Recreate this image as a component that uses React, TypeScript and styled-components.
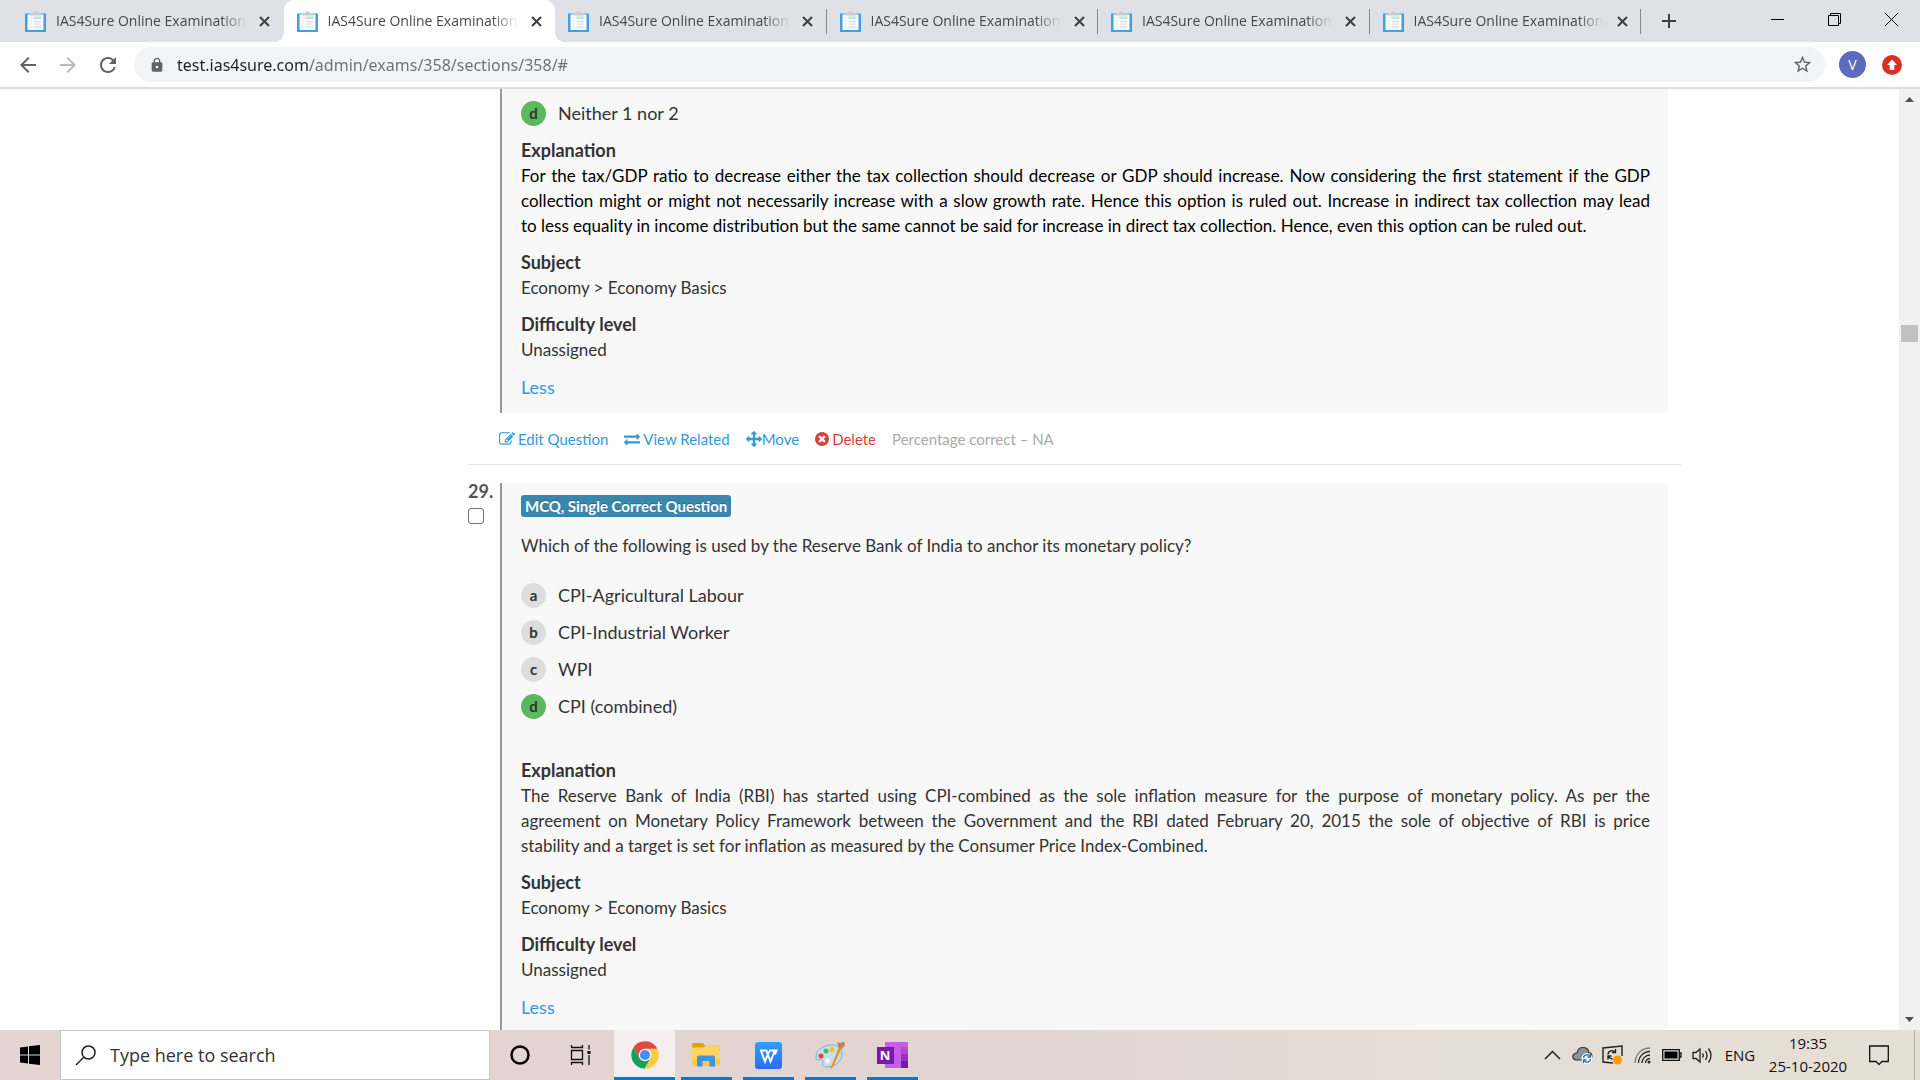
import React from "react";
import styled, { createGlobalStyle, css } from "styled-components";
import {
  MdAdd,
  MdArrowBack,
  MdArrowForward,
  MdLock,
  MdRefresh,
  MdStarBorder,
} from "react-icons/md";

const UI_FONT = '"Open Sans", "Noto Sans", sans-serif';
const PAGE_FONT = 'Lato, "Open Sans", sans-serif';

const GlobalStyle = createGlobalStyle`
  *, *::before, *::after { box-sizing: border-box; }
  body { margin: 0; background: #fff; }
  button { padding: 0; border: 0; background: none; font: inherit; color: inherit; }
  p, h3, ol { margin: 0; padding: 0; }
  svg { display: block; flex: none; }
`;

const Desktop = styled.div`
  display: flex;
  flex-direction: column;
  height: 100vh;
  overflow: hidden;
`;

/* ---------- browser frame ---------- */

const TabStrip = styled.header`
  display: flex;
  height: 42px;
  padding-left: 12px;
  background: #dee1e6;
  font-family: ${UI_FONT};
`;

const TabList = styled.div`
  display: flex;
  flex: 0 1 1629px;
  min-width: 0;
`;

const Tab = styled.div<{ $active?: boolean; $divider?: boolean }>`
  position: relative;
  display: flex;
  flex: 1 1 0;
  min-width: 0;
  align-items: center;
  gap: 10px;
  padding: 0 11px 0 13px;
  ${(p) =>
    p.$active &&
    css`
      background: #fff;
      border-radius: 10px 10px 0 0;
      &::before,
      &::after {
        content: "";
        position: absolute;
        bottom: 0;
        width: 10px;
        height: 10px;
      }
      &::before {
        right: 100%;
        background: radial-gradient(circle at 0 0, transparent 10px, #fff 10px);
      }
      &::after {
        left: 100%;
        background: radial-gradient(circle at 100% 0, transparent 10px, #fff 10px);
      }
    `}
  ${(p) =>
    p.$divider &&
    css`
      &::after {
        content: "";
        position: absolute;
        right: 0;
        top: 9px;
        width: 1px;
        height: 25px;
        background: #84878c;
      }
    `}
`;

const TabTitle = styled.span`
  flex: 1;
  min-width: 0;
  overflow: hidden;
  white-space: nowrap;
  font-size: 14px;
  line-height: 20px;
  color: #45494d;
  mask-image: linear-gradient(to right, #000 calc(100% - 26px), transparent);
`;

const TabClose = styled.button`
  display: grid;
  place-items: center;
  width: 16px;
  height: 20px;
`;

const NewTab = styled.button`
  display: grid;
  place-items: center;
  width: 56px;
  font-size: 24px;
  color: #3c4043;
`;

const WindowButtons = styled.div`
  display: flex;
  margin-left: auto;
  height: 38px;
`;

const WindowButton = styled.button`
  display: grid;
  place-items: center;
  width: 57px;
`;

const Toolbar = styled.div`
  display: flex;
  align-items: center;
  height: 47px;
  padding: 0 14px;
  border-bottom: 2px solid #dadce0;
  background: #fff;
  font-family: ${UI_FONT};
`;

const NavButton = styled.button<{ $dim?: boolean }>`
  display: grid;
  place-items: center;
  width: 40px;
  height: 35px;
  margin-left: -6px;
  margin-right: 6px;
  font-size: 24px;
  color: ${(p) => (p.$dim ? "#b8babc" : "#5f6368")};
`;

const AddressBar = styled.label`
  display: flex;
  flex: 1;
  align-items: center;
  gap: 12px;
  height: 35px;
  margin-right: 14px;
  padding: 0 12px 0 15px;
  border-radius: 18px;
  background: #f1f3f4;
  font-size: 16px;
  color: #5f6368;
`;

const AddressInput = styled.input`
  flex: 1;
  min-width: 0;
  padding: 0;
  border: 0;
  outline: 0;
  font-family: "Noto Sans", "Open Sans", sans-serif;
  font-size: 16px;
  line-height: 24px;
  background: linear-gradient(to right, #202124 133px, #6b6f73 133px);
  background-clip: text;
  -webkit-text-fill-color: transparent;
`;

const IconButton = styled.button`
  font-size: 21px;
  color: #5f6368;
`;

const Round = styled.button<{ $size: number; $color: string }>`
  display: grid;
  place-items: center;
  width: ${(p) => p.$size}px;
  height: ${(p) => p.$size}px;
  border-radius: 50%;
  background: ${(p) => p.$color};
  color: #fff;
  font-size: 14px;
`;

const ToolbarEnd = styled.div`
  display: flex;
  align-items: center;
  gap: 16px;
  margin-right: 4px;
`;

/* ---------- page ---------- */

const Viewport = styled.div`
  display: flex;
  flex: 1;
  min-height: 0;
`;

const Page = styled.main`
  flex: 1;
  min-width: 0;
  overflow: hidden;
  padding: 0 218px 0 468px;
  font-family: ${PAGE_FONT};
  font-size: 17px;
  line-height: 25px;
  color: #333;
`;

const Question = styled.section`
  display: grid;
  grid-template-columns: 32px minmax(0, 1fr);
  padding-right: 13px;
`;

const Marker = styled.div`
  display: flex;
  flex-direction: column;
  align-items: flex-start;
  font-size: 18px;
  font-weight: 700;
  line-height: 16px;
  color: #555;
`;

const CheckBox = styled.input`
  appearance: none;
  width: 16px;
  height: 16px;
  margin: 9px 0 0;
  border: 1px solid #767676;
  border-radius: 3px;
  background: #fff;
`;

const Card = styled.div`
  padding: 12px 18px 13px 19px;
  border-left: 2px solid #999;
  background: #f8f8f8;
`;

const TypeLabel = styled.span`
  display: inline-block;
  padding: 0 4px;
  border-radius: 3px;
  background: #3a87ad;
  color: #fff;
  font-size: 15px;
  font-weight: 700;
  line-height: 22px;
  text-shadow: 0 -1px 0 rgba(0, 0, 0, 0.25);
  vertical-align: top;
`;

const Prompt = styled.p`
  margin: 13px 0 25px;
`;

const Options = styled.ol<{ $spaced?: boolean }>`
  display: flex;
  flex-direction: column;
  gap: 12px;
  margin-bottom: ${(p) => (p.$spaced ? 39 : 12)}px;
  font-size: 18px;
  list-style: none;
`;

const Option = styled.li`
  display: flex;
  gap: 12px;
`;

const Letter = styled.span<{ $correct?: boolean }>`
  width: 25px;
  height: 25px;
  border-radius: 50%;
  background: ${(p) => (p.$correct ? "#5cb85c" : "#ddd")};
  font-size: 15px;
  font-weight: 700;
  text-align: center;
`;

const Block = styled.div`
  margin-bottom: 12px;
`;

const BlockTitle = styled.h3`
  font-size: 18px;
  font-weight: 700;
  line-height: 25px;
`;

const BlockText = styled.p<{ $dark?: boolean }>`
  color: ${(p) => (p.$dark ? "#000" : "inherit")};
  text-align: justify;
`;

const Less = styled.a`
  display: inline-block;
  margin-top: 1px;
  color: #3498db;
  font-size: 18px;
  text-decoration: none;
  vertical-align: top;
`;

const Actions = styled.div`
  display: flex;
  align-items: center;
  gap: 16px;
  height: 51px;
  padding: 1px 0 0 31px;
  font-size: 15px;
`;

const Action = styled.a<{ $danger?: boolean; $tight?: boolean }>`
  display: flex;
  align-items: center;
  gap: ${(p) => (p.$tight ? 0 : 3)}px;
  color: ${(p) => (p.$danger ? "#d9403b" : "#3498db")};
  text-decoration: none;
`;

const Muted = styled.span`
  color: #aaa;
`;

const Rule = styled.hr`
  height: 1px;
  margin: 0 0 18px;
  border: 0;
  background: #e3e3e3;
`;

const ScrollTrack = styled.div`
  display: flex;
  flex-direction: column;
  width: 21px;
  background: #f1f1f1;
`;

const ScrollArrow = styled.button`
  display: grid;
  place-items: center;
  height: 21px;
`;

const ScrollThumb = styled.div`
  width: 17px;
  height: 17px;
  margin: 215px auto auto;
  background: #c1c1c1;
`;

/* ---------- taskbar ---------- */

const Taskbar = styled.footer`
  display: flex;
  height: 50px;
  background: linear-gradient(to right, #e4d5d2, #e2d4d1 50%, #e4ddd5 75%, #e6dfd6);
  font-family: ${UI_FONT};
  color: #111;
`;

const TaskButton = styled.button<{ $w: number }>`
  display: grid;
  place-items: center;
  width: ${(p) => p.$w}px;
`;

const SearchBox = styled.label`
  display: flex;
  align-items: center;
  gap: 14px;
  width: 430px;
  padding-left: 14px;
  border: 1px solid #c6c6cb;
  background: #fff;
`;

const SearchInput = styled.input`
  flex: 1;
  min-width: 0;
  padding: 0;
  border: 0;
  outline: 0;
  background: none;
  font-family: inherit;
  font-size: 18px;
  &::placeholder {
    color: #333;
    opacity: 1;
  }
`;

const Apps = styled.nav`
  display: flex;
  margin-left: 4px;
`;

const AppButton = styled.button<{ $active?: boolean }>`
  display: grid;
  place-items: center;
  width: ${(p) => (p.$active ? 61 : 62)}px;
  background:
    linear-gradient(#0078d7, #0078d7) center bottom / ${(p) => (p.$active ? "100%" : "51px")} 3px no-repeat,
    ${(p) => (p.$active ? "#f4efee" : "transparent")};
`;

const Tray = styled.div`
  display: flex;
  margin-left: auto;
  padding-right: 5px;
  font-size: 15px;
`;

const Clock = styled.button`
  width: 90px;
  line-height: 23px;
  font-size: 15px;
`;

const ShowDesktop = styled.button`
  width: 10px;
  border-right: 1px solid #b9b3ab;
`;

/* ---------- drawings ---------- */

const Favicon = () => (
  <svg width="21" height="21" viewBox="0 0 21 21">
    <path d="M0 2.500h21v18.500H0z" fill="#3f9fdf" />
    <path d="M2.500 3.500h16v15.500h-16z" fill="#fbfcfc" />
    <path d="M5 2h3l1-1.500h3L13 2h3v2.500H5z" fill="#c9cdd0" />
    <path d="M8.500 5.500h8v2.500h-8z" fill="#bfe6da" />
    <path d="M5.500 7H7M5.500 10H7M5.500 13H7M5.500 16H7M9 10.500h7M9 13h7M9 16h7" stroke="#cfd6da" />
  </svg>
);

const Cross = () => (
  <svg width="11" height="11" viewBox="0 0 11 11" stroke="#3c4043" strokeWidth="2">
    <path d="M1 1L10 10M10 1L1 10" />
  </svg>
);

const UpdateArrow = () => (
  <svg width="12" height="12" viewBox="0 0 12 12" fill="#fff">
    <path d="M6 .5L11 6H8.300v5H3.700V6H1z" />
  </svg>
);

const Triangle = ({ up }: { up?: boolean }) => (
  <svg width="9" height="5" viewBox="0 0 9 5">
    <path d={up ? "M0 5L4.500 0L9 5z" : "M0 0L4.500 5L9 0z"} fill="#505050" />
  </svg>
);

const glyphs = {
  edit: "M888 1184l116-116-152-152-116 116v56h96v96h56zm440-720q-16-16-33 1l-350 350q-17 17-1 33t33-1l350-350q17-17 1-33zm80 594v190q0 119-84.500 203.500t-203.500 84.500h-832q-119 0-203.500-84.500t-84.500-203.500v-832q0-119 84.500-203.500t203.500-84.500h832q63 0 117 25 15 7 18 23 3 17-9 29l-49 49q-14 14-32 8-23-6-45-6h-832q-66 0-113 47t-47 113v832q0 66 47 113t113 47h832q66 0 113-47t47-113v-126q0-13 9-22l64-64q15-15 35-7t20 29zm-96-738l288 288-672 672h-288v-288zm444 132l-92 92-288-288 92-92q28-28 68-28t68 28l152 152q28 28 28 68t-28 68z",
  exchange:
    "M1792 1184v192q0 13-9.500 22.500t-22.500 9.500h-1376v192q0 13-9.500 22.500t-22.500 9.500q-12 0-24-10l-319-320q-9-9-9-22 0-14 9-23l320-320q9-9 23-9 13 0 22.500 9.500t9.500 22.500v192h1376q13 0 22.500 9.500t9.500 22.500zm0-544q0 14-9 23l-320 320q-9 9-23 9-13 0-22.500-9.500t-9.500-22.500v-192h-1376q-13 0-22.500-9.500t-9.500-22.500v-192q0-13 9.500-22.500t22.500-9.500h1376v-192q0-14 9-23t23-9q12 0 24 10l319 319q9 9 9 23z",
  move: "M1792 896q0 26-19 45l-256 256q-19 19-45 19t-45-19-19-45v-128h-384v384h128q26 0 45 19t19 45-19 45l-256 256q-19 19-45 19t-45-19l-256-256q-19-19-19-45t19-45 45-19h128v-384h-384v128q0 26-19 45t-45 19-45-19l-256-256q-19-19-19-45t19-45l256-256q19-19 45-19t45 19 19 45v128h384v-384h-128q-26 0-45-19t-19-45 19-45l256-256q19-19 45-19t45 19l256 256q19 19 19 45t-19 45-45 19h-128v384h384v-128q0-26 19-45t45-19 45 19l256 256q19 19 19 45z",
  remove:
    "M1277 1122q0-26-19-45l-181-181 181-181q19-19 19-45 0-27-19-46l-90-90q-19-19-46-19-26 0-45 19l-181 181-181-181q-19-19-45-19-27 0-46 19l-90 90q-19 19-19 46 0 26 19 45l181 181-181 181q-19 19-19 45 0 27 19 46l90 90q19 19 46 19 26 0 45-19l181-181 181 181q19 19 45 19 27 0 46-19l90-90q19-19 19-46zm387-226q0 209-103 385.500t-279.500 279.500-385.500 103-385.500-103-279.500-279.500-103-385.500 103-385.500 279.500-279.500 385.500-103 385.500 103 279.500 279.500 103 385.500z",
};

const Glyph = ({ name, size = 16, inset = 0 }: { name: keyof typeof glyphs; size?: number; inset?: number }) => (
  <svg width={size} height={size} viewBox={`${inset} ${inset} ${1792 - inset * 2} ${1792 - inset * 2}`} fill="currentColor">
    <path d={glyphs[name]} />
  </svg>
);

const WindowsLogo = () => (
  <svg width="20" height="20" viewBox="0 0 20 20" fill="#000">
    <path d="M0 2.600L8 1.500V9.500H0zM9 1.300L20 0V9.500H9zM0 10.500H8V18.500L0 17.400zM9 10.500H20V20L9 18.700z" />
  </svg>
);

const SearchIcon = () => (
  <svg width="21" height="21" viewBox="0 0 21 21" fill="none" stroke="#222" strokeWidth="1.500">
    <circle cx="13.500" cy="7.500" r="6.500" />
    <path d="M9 12L1 20" />
  </svg>
);

const TaskViewIcon = () => (
  <svg width="21" height="20" viewBox="0 0 21 20" fill="none" stroke="#111" strokeWidth="1.300">
    <path d="M1.500 5.500h11v9h-11zM1.500 0v2.500h11V0M1.500 20v-2.500h11V20M19 0v4.500M19 10v10" />
    <path d="M17.500 6h3v3h-3z" fill="#111" stroke="none" />
  </svg>
);

const ChromeLogo = () => (
  <svg width="30" height="30" viewBox="0 0 48 48">
    <path d="M24 14H43.600A22 22 0 0 1 22.860 45.970L32.660 29z" fill="#ffcd40" />
    <path d="M32.660 29L22.860 45.970A22 22 0 0 1 5.540 12.030L15.340 29z" fill="#12a15e" />
    <path d="M15.340 29L5.540 12.030A22 22 0 0 1 43.600 14H24z" fill="#dd4b3e" />
    <circle cx="24" cy="24" r="10" fill="#f4f4f4" />
    <circle cx="24" cy="24" r="8" fill="#4c8bf5" />
  </svg>
);

const FolderIcon = () => (
  <svg width="28" height="24" viewBox="0 0 28 24">
    <path d="M0 1.500Q0 0 1.500 0H11l2 2.500h13.500q1 0 1 1V8H0z" fill="#e3a008" />
    <path d="M0 4.500h11.500L14 2.500h13.500V22.500H0z" fill="#fcd462" />
    <path d="M0 16h27.500v6.500H0z" fill="#fbc94a" />
    <path d="M5 23.500V14.500q0-2 2-2h14q2 0 2 2V23.500h-5.500V18h-7v5.500z" fill="#3a96dd" />
  </svg>
);

const WpsIcon = () => (
  <svg width="27" height="27" viewBox="0 0 27 27">
    <defs>
      <linearGradient id="wps" x1="0" y1="0" x2="0" y2="1">
        <stop offset="0" stopColor="#2fa0ff" />
        <stop offset="1" stopColor="#2b6cf6" />
      </linearGradient>
    </defs>
    <rect width="27" height="27" rx="3" fill="url(#wps)" />
    <path d="M5 8.500h7.500M6 9l4 10.500 4-10M11.500 9l4 10.500L19.500 9.500M14 8.500H21.500l-1.500 4" fill="none" stroke="#fff" strokeWidth="2" />
  </svg>
);

const PaintIcon = () => (
  <svg width="30" height="29" viewBox="0 0 30 29">
    <path d="M1 17C0 9 9 4 17 4c6 0 10 4 10 9 0 8-8 13-15 13-4 0-5-2-4-4 1-3-2-4-4-3-2 0-3 0-3-2z" fill="#c3e0f1" stroke="#7fb0d2" />
    <circle cx="6" cy="15" r="2.500" fill="#e0453c" />
    <circle cx="11" cy="10" r="2.500" fill="#54b948" />
    <circle cx="17" cy="8.500" r="2.500" fill="#f6c22f" />
    <circle cx="12.500" cy="20" r="2.500" fill="#f7fbfd" />
    <path d="M24 6L16.500 25l-1.500 3.500 3-2.500L26.500 7z" fill="#f08a24" />
    <path d="M22 1l3 1 4-1.500L30 4l-3 4-3.500-1.500z" fill="#b98b5a" />
  </svg>
);

const OneNoteMark = styled.span`
  display: grid;
  grid-template-columns: 8px 16px 7px;
  grid-template-rows: 5px 7px 7px 7px;
`;
const NotePage = styled.span`
  grid-area: 1 / 2 / 5 / 4;
  background: #c55fe8;
`;
const NoteTab = styled.span<{ $row: number; $color: string }>`
  grid-area: ${(p) => p.$row} / 3;
  background: ${(p) => p.$color};
`;
const NoteLetter = styled.span`
  z-index: 1;
  grid-area: 2 / 1 / 5 / 3;
  width: 17px;
  height: 17px;
  background: #7719aa;
  color: #fff;
  font-size: 13px;
  font-weight: 700;
  line-height: 17px;
`;

const OneNoteIcon = () => (
  <OneNoteMark>
    <NotePage />
    <NoteTab $row={2} $color="#ae4bd5" />
    <NoteTab $row={3} $color="#9332bf" />
    <NoteTab $row={4} $color="#7719aa" />
    <NoteLetter>N</NoteLetter>
  </OneNoteMark>
);

const tray: { label: string; icon: React.ReactNode }[] = [
  {
    label: "Show hidden icons",
    icon: (
      <svg width="17" height="10" viewBox="0 0 17 10" fill="none" stroke="#222" strokeWidth="1.500">
        <path d="M1 9L8.500 1.500L16 9" />
      </svg>
    ),
  },
  {
    label: "OneDrive",
    icon: (
      <svg width="21" height="18" viewBox="0 0 21 18">
        <path d="M4 14Q0 13 1 9.500 2 7 5 7 6 1.500 11 1.500q5 0 6 5 3 .5 3 4 0 3-3 3.500z" fill="#8f9091" stroke="#333" strokeWidth="1.200" />
        <circle cx="15" cy="12.500" r="5.500" fill="#fff" />
        <path d="M11.500 12a3.500 3.500 0 0 1 6.500-1.500M18.500 13a3.500 3.500 0 0 1-6.500 1.500M18.500 8v3h-3M11.500 17v-3h3" fill="none" stroke="#1377d1" strokeWidth="1.300" />
      </svg>
    ),
  },
  {
    label: "Windows Update",
    icon: (
      <svg width="21" height="20" viewBox="0 0 21 20">
        <path d="M11 18L1 17V3L20 1v10" fill="none" stroke="#222" strokeWidth="1.400" />
        <path d="M6 9.500a4 4 0 0 1 7-2.500M13.500 4v3.500H10M6 14.500V11h3.500M6.500 11.500Q8 14 10.500 14" fill="none" stroke="#222" strokeWidth="1.400" />
        <circle cx="15.500" cy="15" r="4.500" fill="#ff9800" />
      </svg>
    ),
  },
  {
    label: "Wi-Fi",
    icon: (
      <svg width="17" height="17" viewBox="0 0 17 17" fill="none" stroke="#222" strokeWidth="1.300">
        <path d="M1 16A15 15 0 0 1 16 1" stroke="#777" />
        <path d="M4.500 16A11.500 11.500 0 0 1 16 4.500M8 16a8 8 0 0 1 8-8M11.500 16a4.500 4.500 0 0 1 4.500-4.500" />
        <circle cx="15" cy="15" r="1.500" fill="#222" stroke="none" />
      </svg>
    ),
  },
  {
    label: "Battery",
    icon: (
      <svg width="20" height="12" viewBox="0 0 20 12">
        <path d="M.7.700h16.600v10.600H.7zM17.500 4H19v4h-1.500" fill="none" stroke="#111" strokeWidth="1.300" />
        <path d="M2.500 2.500h13v7h-13z" fill="#000" />
      </svg>
    ),
  },
  {
    label: "Volume",
    icon: (
      <svg width="21" height="17" viewBox="0 0 21 17" fill="none" stroke="#222" strokeWidth="1.300">
        <path d="M1 5.500h3L8 2v13l-4-3.500H1z" />
        <path d="M10.500 6.500q1.500 2 0 4M13.500 4q3 4.500 0 9M16.500 1.500q5 7 0 14" />
      </svg>
    ),
  },
];

const apps: { name: string; icon: React.ReactNode; active?: boolean }[] = [
  { name: "Google Chrome", icon: <ChromeLogo />, active: true },
  { name: "File Explorer", icon: <FolderIcon /> },
  { name: "WPS Office", icon: <WpsIcon /> },
  { name: "Paint", icon: <PaintIcon /> },
  { name: "OneNote", icon: <OneNoteIcon /> },
];

const Details = ({ dark, children }: { dark?: boolean; children: React.ReactNode }) => (
  <>
    <Block>
      <BlockTitle>Explanation</BlockTitle>
      <BlockText $dark={dark}>{children}</BlockText>
    </Block>
    <Block>
      <BlockTitle>Subject</BlockTitle>
      <BlockText>Economy &gt; Economy Basics</BlockText>
    </Block>
    <Block>
      <BlockTitle>Difficulty level</BlockTitle>
      <BlockText>Unassigned</BlockText>
    </Block>
    <Less href="#">Less</Less>
  </>
);

const answers = ["CPI-Agricultural Labour", "CPI-Industrial Worker", "WPI", "CPI (combined)"];

export default function App() {
  return (
    <Desktop>
      <GlobalStyle />
      <TabStrip>
        <TabList role="tablist">
          {[0, 1, 2, 3, 4, 5].map((i) => (
            <Tab key={i} role="tab" aria-selected={i === 1} $active={i === 1} $divider={i > 1}>
              <Favicon />
              <TabTitle>IAS4Sure Online Examination</TabTitle>
              <TabClose aria-label="Close tab">
                <Cross />
              </TabClose>
            </Tab>
          ))}
        </TabList>
        <NewTab aria-label="New tab">
          <MdAdd />
        </NewTab>
        <WindowButtons>
          <WindowButton aria-label="Minimize">
            <svg width="13" height="13" viewBox="0 0 13 13" stroke="#000">
              <path d="M0 6.500h13" />
            </svg>
          </WindowButton>
          <WindowButton aria-label="Restore">
            <svg width="13" height="13" viewBox="0 0 13 13" fill="none" stroke="#000">
              <path d="M.5 2.500h10v10H.5zM2.500 2.500v-2h10v10h-2" />
            </svg>
          </WindowButton>
          <WindowButton aria-label="Close">
            <svg width="13" height="13" viewBox="0 0 13 13" stroke="#000">
              <path d="M0 0L13 13M13 0L0 13" />
            </svg>
          </WindowButton>
        </WindowButtons>
      </TabStrip>

      <Toolbar>
        <NavButton aria-label="Back">
          <MdArrowBack />
        </NavButton>
        <NavButton aria-label="Forward" $dim>
          <MdArrowForward />
        </NavButton>
        <NavButton aria-label="Reload">
          <MdRefresh />
        </NavButton>
        <AddressBar>
          <MdLock />
          <AddressInput aria-label="Address" defaultValue="test.ias4sure.com/admin/exams/358/sections/358/#" />
          <IconButton aria-label="Bookmark">
            <MdStarBorder />
          </IconButton>
        </AddressBar>
        <ToolbarEnd>
          <Round $size={27} $color="#5c6bc0">
            V
          </Round>
          <Round $size={20} $color="#d93025" aria-label="Update">
            <UpdateArrow />
          </Round>
        </ToolbarEnd>
      </Toolbar>

      <Viewport>
        <Page>
          <Question>
            <span />
            <Card>
              <Options>
                <Option>
                  <Letter $correct>d</Letter>
                  Neither 1 nor 2
                </Option>
              </Options>
              <Details dark>
                For the tax/GDP ratio to decrease either the tax collection should decrease or GDP should increase. Now
                considering the first statement if the GDP collection might or might not necessarily increase with a
                slow growth rate. Hence this option is ruled out. Increase in indirect tax collection may lead
                to&nbsp;less equality in income distribution but the same cannot be said for increase in direct tax
                collection. Hence, even this option can be ruled out.
              </Details>
            </Card>
          </Question>
          <Actions>
            <Action href="#">
              <Glyph name="edit" />
              Edit Question
            </Action>
            <Action href="#">
              <Glyph name="exchange" />
              View Related
            </Action>
            <Action href="#" $tight>
              <Glyph name="move" />
              Move
            </Action>
            <Action href="#" $danger>
              <Glyph name="remove" size={14} inset={128} />
              Delete
            </Action>
            <Muted>Percentage correct – NA</Muted>
          </Actions>
          <Rule />
          <Question>
            <Marker>
              <label htmlFor="question-29">29.</label>
              <CheckBox type="checkbox" id="question-29" />
            </Marker>
            <Card>
              <TypeLabel>MCQ, Single Correct Question</TypeLabel>
              <Prompt>Which of the following is used by the Reserve Bank of India to anchor its monetary policy?</Prompt>
              <Options $spaced>
                {answers.map((text, i) => (
                  <Option key={text}>
                    <Letter $correct={i === 3}>{"abcd"[i]}</Letter>
                    {text}
                  </Option>
                ))}
              </Options>
              <Details>
                The Reserve Bank of India (RBI) has started using CPI-combined as the sole inflation measure for the
                purpose of monetary policy. As per the agreement&nbsp;on&nbsp;Monetary Policy Framework between the
                Government and the RBI dated February 20, 2015 the sole of objective of RBI is price
                stability&nbsp;and&nbsp;a&nbsp;target&nbsp;is&nbsp;set for inflation as measured by the Consumer Price
                Index-Combined.
              </Details>
            </Card>
          </Question>
        </Page>
        <ScrollTrack>
          <ScrollArrow aria-label="Scroll up">
            <Triangle up />
          </ScrollArrow>
          <ScrollThumb />
          <ScrollArrow aria-label="Scroll down">
            <Triangle />
          </ScrollArrow>
        </ScrollTrack>
      </Viewport>

      <Taskbar>
        <TaskButton $w={60} aria-label="Start">
          <WindowsLogo />
        </TaskButton>
        <SearchBox>
          <SearchIcon />
          <SearchInput aria-label="Search" placeholder="Type here to search" />
        </SearchBox>
        <TaskButton $w={60} aria-label="Cortana">
          <svg width="20" height="20" viewBox="0 0 20 20" fill="none" stroke="#000" strokeWidth="2.500">
            <circle cx="10" cy="10" r="8.500" />
          </svg>
        </TaskButton>
        <TaskButton $w={60} aria-label="Task view">
          <TaskViewIcon />
        </TaskButton>
        <Apps>
          {apps.map((app) => (
            <AppButton key={app.name} aria-label={app.name} $active={app.active}>
              {app.icon}
            </AppButton>
          ))}
        </Apps>
        <Tray>
          {tray.map((item) => (
            <TaskButton key={item.label} $w={30} aria-label={item.label}>
              {item.icon}
            </TaskButton>
          ))}
          <TaskButton $w={46}>ENG</TaskButton>
          <Clock>
            19:35
            <br />
            25-10-2020
          </Clock>
          <TaskButton $w={52} aria-label="Notifications">
            <svg width="20" height="20" viewBox="0 0 20 20" fill="none" stroke="#111" strokeWidth="1.300">
              <path d="M.7 1h18.600v15.500H13l-3 3-3-3H.7z" />
            </svg>
          </TaskButton>
          <ShowDesktop aria-label="Show desktop" />
        </Tray>
      </Taskbar>
    </Desktop>
  );
}
